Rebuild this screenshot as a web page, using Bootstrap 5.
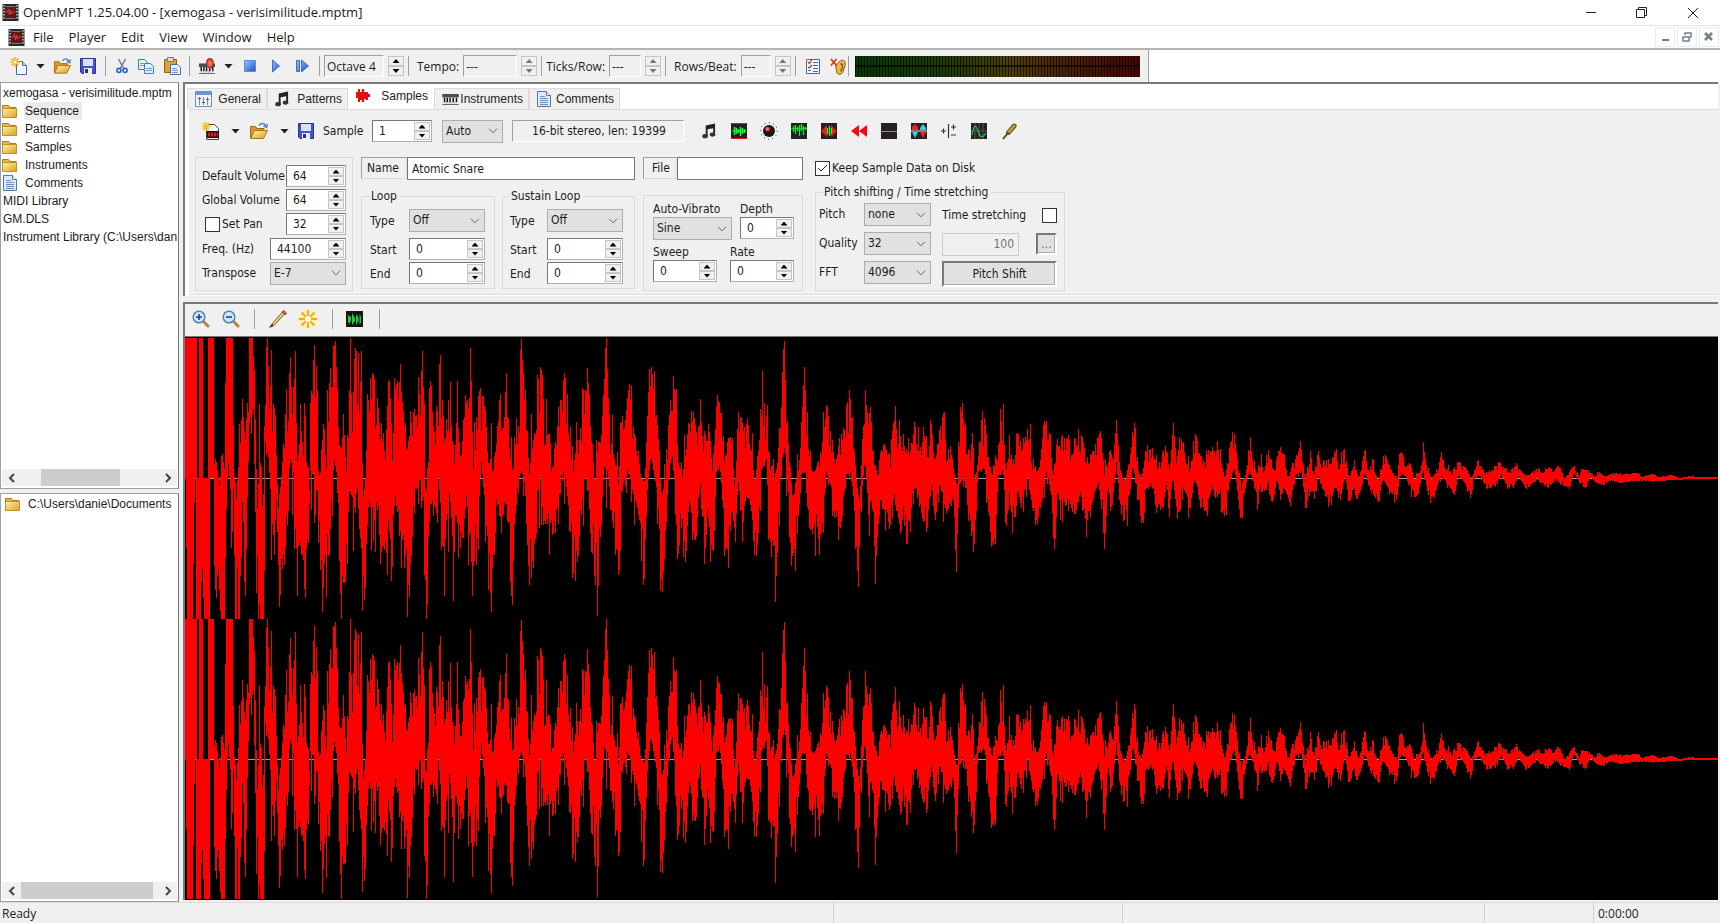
<!DOCTYPE html>
<html lang="en">
<head>
<meta charset="utf-8">
<meta name="viewport" content="width=device-width, initial-scale=1">
<title>OpenMPT 1.25.04.00 - [xemogasa - verisimilitude.mptm]</title>
<link href="https://cdn.jsdelivr.net/npm/bootstrap@5.3.0/dist/css/bootstrap.min.css" rel="stylesheet">
<style>
:root{--face:#f0f0f0;--edge:#a0a0a0;--dark:#787878;--soft:#dcdcdc}
body{font:12px/15px "DejaVu Sans Condensed","Liberation Sans",sans-serif;color:#1c1c1c;background:var(--face);height:100vh;overflow:hidden}
svg{display:block;flex:none}
button{border:0;background:none;padding:0;color:inherit;font:inherit}
.ui-font{font-family:"Open Sans","Noto Sans",sans-serif}
.gdi-font{font-family:"Liberation Sans",Arial,sans-serif}
.titlebar{height:26px;font-size:13px;background:#fff;padding-left:2px;border-bottom:1px solid #e4e4e4}
.titlebar button{width:51px;height:25px}
.menubar{height:24px;font-size:13px;background:#fff;padding-left:8px;border-bottom:2px solid #b4b4b4}
.menubar a{color:#1c1c1c;text-decoration:none;margin-right:15px}
.mdi button{width:20px;height:20px;border:1px solid #ececec;margin-left:2px}
.toolbar{height:32px;background:#fff;font-size:12px}
.toolbar-in{background:var(--face);border-right:1px solid var(--edge);width:1149px;padding-left:10px}
.vline{width:1px;height:20px;background:var(--edge);flex:none}
.tbtn{width:18px;height:22px;display:flex;align-items:center;justify-content:center;flex:none}
.drop{width:9px;height:5px;background:#222;clip-path:polygon(0 0,100% 0,50% 100%);flex:none}
.readout{height:22px;border:1px solid #fff;border-top-color:var(--edge);border-left-color:var(--edge);background:var(--face);border-radius:0;padding:0 2px;min-width:0;font:inherit;color:inherit}
.meter{width:285px;flex:none;height:21px;background:linear-gradient(#0000 9px,#0009 9px 11px,#0000 11px),repeating-linear-gradient(90deg,#000a 0 1px,#0000 1px 3px),linear-gradient(90deg,#033a06,#233d04 33%,#524004 55%,#4c2202 75%,#480404)}
.side{width:179px;flex:none;font-size:12px}
.pane{background:#fff;border:1px solid var(--edge);border-right-color:var(--dark)}
.tree{list-style:none;margin:0;padding:1px 0 0}
.tree li{height:18px;line-height:18px;white-space:nowrap;overflow:hidden;padding-left:2px;display:flex;align-items:center}
.tree li svg{margin-left:-1px;margin-right:7px}
.tree .sel{background:#ebebeb;padding:0 3px 0 1px;margin-left:-1px}
.hscroll{height:17px;background:var(--face);margin:0 1px 2px;display:flex}
.hscroll button{width:19px;flex:none;display:flex;align-items:center;justify-content:center}
.hscroll .thumb{background:#cdcdcd;height:17px}
.docs{min-width:0}
.upper{border-left:2px solid var(--dark);border-top:2px solid var(--dark);height:214px;background:#fff;margin-left:4px;margin-right:2px}
.tabstrip{height:25px;padding-left:2px;font-size:12px}
.tabstrip button{height:21px;border:1px solid var(--soft);border-bottom:0;background:var(--face);display:flex;align-items:center;justify-content:space-between;padding:0 5px 0 7px}
.tabstrip button.on{height:24px;background:#fff;border-color:#fff;padding-bottom:3px}
.props{background:var(--face);border-top:1px solid var(--soft);margin-left:4px;height:186px;padding:9px 0 0 6px;border-bottom:1px solid var(--soft)}
.cmd-row{height:24px}
fieldset{border:1px solid var(--soft);padding:6px 0 4px 8px;margin:0;min-width:0}
legend{float:none;width:auto;font-size:12px;line-height:14px;margin:0;padding:0 3px 0 1px}
.spin{display:flex;height:22px;border:1px solid var(--dark);border-right-color:#b0b0b0;border-bottom-color:#b0b0b0;background:#fff;padding:1px}
.spin input{flex:1 1 0;min-width:0;border:0;padding:0 0 0 5px;font:inherit;color:inherit;background:none}
.updown{width:16px;flex:none;display:flex;flex-direction:column}
.updown button{flex:1;background:var(--face);border:1px solid #c6c6c6;display:flex;align-items:center;justify-content:center}
.updown button::before{content:"";width:7px;height:4px;background:#000;clip-path:polygon(50% 0,100% 100%,0 100%)}
.updown button:last-child::before{clip-path:polygon(0 0,100% 0,50% 100%)}
.updown.off button::before{background:#777}
.combo{appearance:none;height:23px;border:1px solid #adadad;border-radius:0;background:#e1e1e1 url("data:image/svg+xml,%3Csvg xmlns='http://www.w3.org/2000/svg' width='10' height='6'%3E%3Cpath d='M1 .8l4 4 4-4' fill='none' stroke='%23666'/%3E%3C/svg%3E") no-repeat right 4px center;padding:0 3px;font:inherit;color:inherit;min-width:0}
.tick{appearance:none;width:15px;height:15px;border:1px solid #333;background:#fff;margin:0;flex:none}
.tick:checked{background:#fff url("data:image/svg+xml,%3Csvg xmlns='http://www.w3.org/2000/svg' width='13' height='13'%3E%3Cpath d='M2 6l3 3 6-6' fill='none' stroke='%23222'/%3E%3C/svg%3E") center}
.cap{border:1px solid var(--soft);border-top-color:var(--edge);border-left-color:var(--edge);height:22px;line-height:20px;padding-left:5px}
.field{border:1px solid var(--dark);background:#fff;height:23px;padding:0 4px;border-radius:0;min-width:0;font:inherit;color:inherit}
.basic{width:158px;height:134px;padding:7px 6px 0;display:flex;flex-direction:column;gap:2px}
.basic>div{display:flex;height:22px;align-items:center;justify-content:space-between;white-space:nowrap}
.basic>.lower-row{margin-bottom:-1px;padding-top:1px;height:23px}
.loop{display:grid;grid-template-columns:39px 76px;grid-template-rows:27px 22px 22px;row-gap:2px;align-items:start;width:124px}
.loop.sus{grid-template-columns:37px 76px}
.loop label{line-height:24px}
.vib label{display:block;line-height:16px}
.stretch{display:grid;grid-template-columns:45px 67px 115px;grid-template-rows:24px 24px 26px;row-gap:5px;padding:4px 0 3px 3px;width:248px}
.stretch>label{padding-top:4px}
.stretch .last{margin-left:11px;width:115px;display:flex;justify-content:space-between;align-items:center}
.push{background:#e1e1e1;border:2px solid #fff;border-top-color:var(--dark);border-left-color:var(--dark);box-shadow:inset -1px -1px #aaa}
.lower{border-left:2px solid var(--dark);border-top:2px solid var(--dark);margin:6px 2px 2px 4px;min-height:0}
.viewbar{height:32px;padding:0 0 2px 7px}
.wave{background:#000;min-height:0;border-top:1px solid var(--dark)}
.status{height:21px;border-top:1px solid var(--soft);padding-left:2px;line-height:22px}
.status div{border-left:1px solid #cfcfcf;padding-left:4px}
</style>
</head>
<body class="d-flex flex-column">

<svg width="0" height="0" class="position-absolute" aria-hidden="true">
 <defs>
  <linearGradient id="gFold" x2="1" y2="1"><stop stop-color="#fff3b0"/><stop offset="1" stop-color="#dd9f1f"/></linearGradient>
  <linearGradient id="gBlue" x2="1" y2="1"><stop stop-color="#9cc4ff"/><stop offset="1" stop-color="#1c50c8"/></linearGradient>
  <radialGradient id="gRed"><stop stop-color="#ff9a80"/><stop offset="1" stop-color="#c81808"/></radialGradient>
 </defs>
 <symbol id="app" viewBox="0 0 16 17"><path fill="#2a2a2a" d="M0 0h16v17H0z"/><path fill="#5c1a1a" d="M3 2h10v13H3z"/><path stroke="#ccc" stroke-width="1.500" stroke-dasharray="1.500 1.500" d="M1.500 1v15M14.500 1v15"/><path stroke="#f33" fill="none" d="M3 8h2l1-3 1 6 1-5 1 4 1-2h3"/><path stroke="#777" d="M3 2.500h10M3 14.500h10"/></symbol>
 <symbol id="new" viewBox="0 0 18 18"><path fill="#f2f7ff" stroke="#4a6a94" d="M6.500 4.500h6l4 4v9h-10z"/><path fill="#b7cfee" stroke="#4a6a94" d="M12.500 4.500v4h4"/><path stroke="#f5b21a" stroke-width="1.600" d="M5 0v10M0 5h10M1.500 1.500l7 7M8.500 1.500l-7 7"/><circle cx="5" cy="5" r="1.600" fill="#fffbd0"/></symbol>
 <symbol id="open" viewBox="0 0 20 18"><path fill="#d79a29" stroke="#9a6a12" d="M1.500 16.500v-12h5l1.500 2h7v3"/><path fill="url(#gFold)" stroke="#a8751a" d="M1.500 16.500l4-8h13l-4 8z"/><path fill="none" stroke="#5b84b8" stroke-width="1.500" d="M10 3.500c2-3 6-2.500 7 1M14.500 4l3 1.500 1-3.500"/></symbol>
 <symbol id="save" viewBox="0 0 16 16"><path fill="#4454c8" stroke="#26348e" d="M.5.5h15v15H2l-1.500-1.500z"/><path fill="#d9e2fb" d="M3 1h10v7H3z"/><path fill="#eee" d="M4 10h8v6H4z"/><path fill="#26348e" d="M5 11h3v4H5z"/></symbol>
 <symbol id="cut" viewBox="0 0 16 18"><path stroke="#7b8ba5" stroke-width="1.800" d="M4 1l6 11M12 1L6 12"/><g fill="none" stroke="#2860bd" stroke-width="1.800"><circle cx="4.500" cy="14" r="2.300"/><circle cx="11.500" cy="14" r="2.300"/></g></symbol>
 <symbol id="copy" viewBox="0 0 18 16"><g fill="#e4efff" stroke="#4a78b8"><path d="M1.500 1.500h6l3 3v7h-9z"/><path d="M7.500 5.500h6l3 3v7h-9z"/></g><path stroke="#6c9ad8" d="M3 5.500h4M3 7.500h4M9 10.500h6M9 12.500h6"/></symbol>
 <symbol id="paste" viewBox="0 0 18 18"><path fill="#d9a33a" stroke="#8f6412" d="M1.500 2.500h12v13h-12z"/><path fill="#ddd" stroke="#777" d="M4.500.5h6v4h-6z"/><path fill="#eaf2ff" stroke="#4a6fa5" d="M7.500 7.500h7l3 3v7h-10z"/><path stroke="#6c9ad8" d="M9 11.500h5M9 13.500h6M9 15.500h6"/></symbol>
 <symbol id="keys" viewBox="0 0 18 12"><path fill="#4a4a4a" d="M0 0h18v4H0z"/><path fill="#eee" d="M0 4h18v7H0z"/><path stroke="#555" d="M0 11.500h18"/><path stroke="#999" stroke-width=".6" d="M4.500 8v3M7.500 8v3M10.500 8v3M13.500 8v3"/><path stroke="#111" stroke-width="1.600" d="M2.500 4v5M5.500 4v5M8.500 4v5M12 4v5M15.500 4v5"/></symbol>
 <symbol id="rec" viewBox="0 0 18 18"><use href="#keys" y="6" width="18" height="12"/><path fill="url(#gRed)" d="M12 0a4.500 4.500 0 014.500 5c0 3-1.500 4-2.500 7h-3c-1-3-3-4-3-7a4.500 4.500 0 014-5z"/></symbol>
 <symbol id="stop" viewBox="0 0 12 12"><path fill="url(#gBlue)" stroke="#5b8ae0" d="M.5.5h11v11H.5z"/></symbol>
 <symbol id="play" viewBox="0 0 8 14"><path fill="url(#gBlue)" stroke="#3b6cd0" d="M.5 1l7 6-7 6z"/></symbol>
 <symbol id="pplay" viewBox="0 0 13 14"><path fill="url(#gBlue)" stroke="#3b6cd0" d="M.5 1.500h3v11h-3zM5.500 1l7 6-7 6z"/></symbol>
 <symbol id="list" viewBox="0 0 16 16"><path fill="#f4f8ff" stroke="#4668a8" d="M1.500 1.500h13v14h-13z"/><path stroke="#3c66c8" d="M8 4.500h5M8 7.500h5M8 10.500h5M8 13.500h5"/><path fill="none" stroke="#d03030" stroke-width="1.300" d="M3 4l1.500 1.500L7 1M3 9l1.500 1L7 7"/><path stroke="#3c66c8" d="M3 12.500h3"/></symbol>
 <symbol id="tune" viewBox="0 0 18 18"><path fill="#e6b94a" stroke="#7d5a10" d="M6 8l5-5c3-2 6 0 5 5l-2 6c-1 4-6 4-7 1z"/><path fill="none" stroke="#7d5a10" stroke-width="1.500" d="M11 6c3 0 3 6 0 8"/><path stroke="#e02818" stroke-width="1.600" d="M1 1l6 7M7 1L1 8"/></symbol>
 <symbol id="folder" viewBox="0 0 16 14"><path fill="#e9b93c" stroke="#b07c14" d="M.5 13.500v-12h6l1.500 2h6v2"/><path fill="url(#gFold)" stroke="#c3901f" d="M.5 4.500h14v9H.5z"/></symbol>
 <symbol id="page" viewBox="0 0 14 16"><path fill="#dce9fa" stroke="#55779f" d="M.5.5h9l4 4v11H.5z"/><path fill="#fff" stroke="#55779f" d="M9.500.5v4h4"/><path stroke="#6e93bf" d="M3 5.500h5M3 7.500h8M3 9.500h8M3 11.500h8M3 13.500h8"/></symbol>
 <symbol id="sliders" viewBox="0 0 17 16"><path fill="#eef4fa" stroke="#6f8fb5" d="M.5.5h16v15H.5z"/><path fill="#6a96d4" d="M1 1h15v3H1z"/><path stroke="#888" d="M4.500 6v8M8.500 6v8M12.500 6v8"/><path stroke="#555" d="M3 7.500h3M7 11.500h3M11 8.500h3"/></symbol>
 <symbol id="note" viewBox="0 0 15 16"><path fill="#222" d="M4 2l10-2v12h-2V5L6 6v8H4z"/><ellipse cx="3.300" cy="13.500" rx="3" ry="2.300" fill="#333"/><ellipse cx="11.300" cy="11.800" rx="3" ry="2.300" fill="#333"/></symbol>
 <symbol id="redwave" viewBox="0 0 14 16"><path stroke="#e01010" stroke-width="2.200" d="M1 4v6M3 1v13M5 4v8M7 1v13M9 4v7M11 4v8M13 6v3"/></symbol>
 <symbol id="newsmp" viewBox="0 0 18 18"><path fill="#f7f7ff" stroke="#444" d="M4.500 2.500h8l4 4v11h-12z"/><path fill="#111" d="M5 9h12v7H5z"/><path stroke="#f11" stroke-width="4" stroke-dasharray="2 1" d="M6 12.500h10"/><path stroke="#f5c21a" stroke-width="1.300" d="M4 0v9M0 4.500h9M1 1l6 7M7 1L1 8"/></symbol>
 <symbol id="norm" viewBox="0 0 16 16"><path fill="#222" d="M0 0h16v16H0z"/><path stroke="#e11" d="M0 .5h16M0 15.500h16"/><path stroke="#1f3" d="M1 8h14"/><path stroke="#1f3" stroke-width="1.500" d="M3.500 4v8M5.500 5v6M7.500 6v4M9.500 4v9M11.500 5v6M13.500 6v4"/></symbol>
 <symbol id="knob" viewBox="0 0 18 18"><circle cx="9" cy="9" r="8.300" fill="none" stroke="#222" stroke-width="1" stroke-dasharray="1 3.300"/><circle cx="9" cy="9" r="6" fill="#181818"/><circle cx="7.500" cy="7" r="2.500" fill="url(#gRed)"/></symbol>
 <symbol id="dc" viewBox="0 0 16 16"><path fill="#222" d="M0 0h16v16H0z"/><path stroke="#2a7" d="M0 5.500h16"/><path stroke="#1e2" stroke-width="1.300" d="M2.500 3v6M4.500 2v9M6.500 4v4M8.500 2v11M10.500 1v7M12.500 3v9M14.500 4v3"/></symbol>
 <symbol id="grow" viewBox="0 0 16 16"><path fill="#222" d="M0 0h16v16H0z"/><path fill="#f11" d="M0 8l6-6v12zM16 8l-6-6v12z"/><path stroke="#1f3" stroke-width="1.300" d="M6.500 5v6M8.500 3v10M10.500 5v6"/></symbol>
 <symbol id="rev" viewBox="0 0 16 14"><path fill="#f00a14" d="M8 1v12L0 7zM16 1v12L8 7z"/></symbol>
 <symbol id="silence" viewBox="0 0 16 16"><path fill="#222" d="M0 0h16v16H0z"/><path stroke="#1d3" d="M0 8.500h16"/></symbol>
 <symbol id="invert" viewBox="0 0 16 16"><path fill="#222" d="M0 0h16v16H0z"/><path fill="#f12020" d="M1 7V4l3-3 3 3v3zM9 9h6l-3 6z"/><path fill="#40c8e8" d="M1 9h6l-3 6zM9 7V5l3-4 3 4v2z"/><path stroke="#ddd" d="M0 8h16"/></symbol>
 <symbol id="sign" viewBox="0 0 16 16"><path stroke="#333" stroke-width="1.200" d="M0 8h5M2.500 5.500v5M7.500 1v14M10 4h5M12.500 1.500v5M10 12h5"/></symbol>
 <symbol id="auto" viewBox="0 0 16 16"><path fill="#222" d="M0 0h16v16H0z"/><path stroke="#555" d="M0 8h16M4 0v16M8 0v16M12 0v16"/><path fill="none" stroke="#2c4" stroke-width="1.200" d="M1 12c2-12 4-10 6-4s4 8 8 2"/></symbol>
 <symbol id="fork" viewBox="0 0 16 18"><path fill="none" stroke="#5a4a10" stroke-width="5" stroke-linecap="round" d="M13 3L7 10"/><path fill="none" stroke="#b8a23c" stroke-width="3" stroke-linecap="round" d="M13 3L7 10"/><path stroke="#5a4a10" stroke-width="2" d="M7 10l-6 7"/></symbol>
 <symbol id="zin" viewBox="0 0 18 18"><path stroke="#b98630" stroke-width="3" stroke-linecap="round" d="M12 12l4 4"/><circle cx="7" cy="7" r="5.800" fill="#d4e8fb" stroke="#5582b4" stroke-width="1.500"/><path stroke="#1c3f90" stroke-width="1.600" d="M4 7h6M7 4v6"/></symbol>
 <symbol id="zout" viewBox="0 0 18 18"><path stroke="#b98630" stroke-width="3" stroke-linecap="round" d="M12 12l4 4"/><circle cx="7" cy="7" r="5.800" fill="#d4e8fb" stroke="#5582b4" stroke-width="1.500"/><path stroke="#1c3f90" stroke-width="1.600" d="M4 7h6"/></symbol>
 <symbol id="pencil" viewBox="0 0 18 18"><path fill="#f0cf7c" stroke="#7a5a20" d="M3 14L13.500 2l2 2L5 15.500z"/><path fill="#d8685c" stroke="#8a3a30" d="M13 2l1.500-1.500L17.500 3 16 5z"/><path fill="#333" d="M2.500 14l2.500 2-5 2z"/></symbol>
 <symbol id="sun" viewBox="0 0 20 20"><circle cx="10" cy="10" r="10" fill="#fff0b0"/><path stroke="#f0ab1c" stroke-width="1.800" d="M10 1v18M1 10h18M3.500 3.500l13 13M16.500 3.500l-13 13"/><circle cx="10" cy="10" r="3" fill="#fffbe0"/></symbol>
 <symbol id="grid" viewBox="0 0 17 16"><path fill="#161616" d="M0 0h17v16H0z"/><path fill="#28c838" d="M2 4l3 2V3l1-1 3 5V2l4 5V3l2 2v7l-2 1-2-3v4l-3-4-1 4-3-4v3l-2-2z"/><path stroke="#111" d="M5.500 0v16M9.500 0v16M13 0v16"/></symbol>
 <symbol id="lt" viewBox="0 0 8 10"><path fill="none" stroke="#444" stroke-width="2" d="M6 1L2 5l4 4"/></symbol>
 <symbol id="gt" viewBox="0 0 8 10"><path fill="none" stroke="#444" stroke-width="2" d="M2 1l4 4-4 4"/></symbol>
</svg>

<header class="titlebar ui-font d-flex align-items-center">
 <svg width="17" height="17"><use href="#app"/></svg><span class="ms-1">OpenMPT 1.25.04.00 - [xemogasa - verisimilitude.mptm]</span>
 <div class="ms-auto d-flex" style="padding-right:2px">
  <button aria-label="Minimize"><svg class="m-auto" width="12" height="12"><path stroke="#222" d="M1 5.500h10"/></svg></button>
  <button aria-label="Restore"><svg class="m-auto" width="12" height="12"><path fill="none" stroke="#222" d="M.5 2.500h8v8h-8zM2.500 2.500v-2h8v8h-2"/></svg></button>
  <button aria-label="Close"><svg class="m-auto" width="12" height="12"><path stroke="#222" d="M1 1l10 10M11 1L1 11"/></svg></button>
 </div>
</header>

<nav class="menubar ui-font d-flex align-items-center">
 <svg class="me-2" width="17" height="17"><use href="#app"/></svg>
 <a href="#">File</a><a href="#">Player</a><a href="#">Edit</a><a href="#">View</a><a href="#">Window</a><a href="#">Help</a>
 <div class="mdi ms-auto d-flex" style="padding-right:1px">
  <button aria-label="Minimize document"><svg class="m-auto" width="9" height="10"><path stroke="#70808f" stroke-width="2" d="M1 8h7"/></svg></button>
  <button aria-label="Restore document"><svg class="m-auto" width="10" height="10"><path fill="none" stroke="#70808f" stroke-width="1.500" d="M1 5h6v4H1zM3 3V1h6v4H7"/></svg></button>
  <button aria-label="Close document"><svg class="m-auto" width="10" height="10"><path stroke="#70808f" stroke-width="2.500" d="M1 1l7 7M8 1L1 8"/></svg></button>
 </div>
</nav>

<div class="toolbar ui-font">
 <div class="toolbar-in d-flex align-items-center h-100">
  <button class="tbtn" aria-label="New"><svg width="18" height="18"><use href="#new"/></svg></button>
  <span class="drop ms-2"></span>
  <button class="tbtn ms-2" aria-label="Open"><svg width="19" height="18"><use href="#open"/></svg></button>
  <button class="tbtn ms-2" aria-label="Save"><svg width="16" height="16"><use href="#save"/></svg></button>
  <span class="vline ms-2 me-1"></span>
  <button class="tbtn ms-1" aria-label="Cut" style="width:15px"><svg width="14" height="16"><use href="#cut"/></svg></button>
  <button class="tbtn ms-2" aria-label="Copy"><svg width="18" height="16"><use href="#copy"/></svg></button>
  <button class="tbtn ms-2" aria-label="Paste"><svg width="18" height="18"><use href="#paste"/></svg></button>
  <span class="vline mx-2"></span>
  <button class="tbtn" aria-label="Record"><svg width="18" height="16"><use href="#rec"/></svg></button>
  <span class="drop ms-2"></span>
  <button class="tbtn ms-2" aria-label="Stop"><svg width="12" height="12"><use href="#stop"/></svg></button>
  <button class="tbtn ms-2" aria-label="Play pattern"><svg width="8" height="14"><use href="#play"/></svg></button>
  <button class="tbtn ms-2" aria-label="Play"><svg width="13" height="14"><use href="#pplay"/></svg></button>
  <span class="vline ms-2 me-1"></span>
  <input class="readout" style="width:60px" value="Octave 4" aria-label="Octave" readonly>
  <span class="updown ms-1" style="height:20px"><button aria-label="Octave up"></button><button aria-label="Octave down"></button></span>
  <span class="vline ms-1"></span>
  <label class="ms-2 me-1" for="tempo">Tempo:</label><input id="tempo" class="readout" style="width:54px" value="---" readonly>
  <span class="updown off ms-1" style="height:20px"><button aria-label="Tempo up"></button><button aria-label="Tempo down"></button></span>
  <span class="vline ms-1"></span>
  <label class="mx-1" for="ticks">Ticks/Row:</label><input id="ticks" class="readout" style="width:32px" value="---" readonly>
  <span class="updown off ms-1" style="height:20px"><button aria-label="Ticks up"></button><button aria-label="Ticks down"></button></span>
  <span class="vline ms-1"></span>
  <label class="ms-2 me-1" for="rows">Rows/Beat:</label><input id="rows" class="readout" style="width:30px" value="---" readonly>
  <span class="updown off ms-1" style="height:20px"><button aria-label="Rows up"></button><button aria-label="Rows down"></button></span>
  <span class="vline ms-1"></span>
  <button class="tbtn ms-2" aria-label="Options"><svg width="16" height="16"><use href="#list"/></svg></button>
  <button class="tbtn ms-2" aria-label="Panic"><svg width="17" height="17"><use href="#tune"/></svg></button>
  <span class="vline ms-auto"></span><span class="meter me-2" style="margin-left:6px"></span>
 </div>
</div>

<div class="d-flex flex-grow-1" style="min-height:0">
 <aside class="side gdi-font d-flex flex-column">
  <div class="pane d-flex flex-column" style="flex:407 1 0">
   <ul class="tree flex-grow-1">
    <li>xemogasa - verisimilitude.mptm</li>
    <li><svg width="16" height="14"><use href="#folder"/></svg><span class="sel">Sequence</span></li>
    <li><svg width="16" height="14"><use href="#folder"/></svg>Patterns</li>
    <li><svg width="16" height="14"><use href="#folder"/></svg>Samples</li>
    <li><svg width="16" height="14"><use href="#folder"/></svg>Instruments</li>
    <li><svg width="16" height="16"><use href="#page"/></svg>Comments</li>
    <li>MIDI Library</li><li>GM.DLS</li><li>Instrument Library (C:\Users\dan</li>
   </ul>
   <div class="hscroll"><button aria-label="Scroll left"><svg width="8" height="10"><use href="#lt"/></svg></button><div style="flex:20"></div><div class="thumb" style="flex:78"></div><div style="flex:38"></div><button aria-label="Scroll right"><svg width="8" height="10"><use href="#gt"/></svg></button></div>
  </div>
  <div class="pane d-flex flex-column mt-1" style="flex:409 1 0">
   <ul class="tree flex-grow-1"><li class="ps-1"><svg class="ms-0" width="16" height="14"><use href="#folder"/></svg>C:\Users\danie\Documents</li></ul>
   <div class="hscroll"><button aria-label="Scroll left"><svg width="8" height="10"><use href="#lt"/></svg></button><div class="thumb" style="flex:131"></div><div style="flex:5"></div><button aria-label="Scroll right"><svg width="8" height="10"><use href="#gt"/></svg></button></div>
  </div>
 </aside>

 <main class="docs flex-grow-1 d-flex flex-column">
  <section class="upper">
   <div class="tabstrip gdi-font d-flex align-items-end" role="tablist">
    <button role="tab" style="width:80px"><svg width="17" height="16"><use href="#sliders"/></svg>General</button>
    <button role="tab" style="width:81px"><svg width="14" height="16"><use href="#note"/></svg>Patterns</button>
    <button role="tab" class="on" style="width:86px"><svg width="14" height="16"><use href="#redwave"/></svg>Samples</button>
    <button role="tab" style="width:95px"><svg width="17" height="11"><use href="#keys"/></svg>Instruments</button>
    <button role="tab" style="width:91px"><svg width="14" height="16"><use href="#page"/></svg>Comments</button>
   </div>
   <div class="props">
    <div class="cmd-row d-flex align-items-center">
     <button class="tbtn" style="margin-left:7px" aria-label="New sample"><svg width="18" height="18"><use href="#newsmp"/></svg></button>
     <span class="drop" style="margin-left:11px"></span>
     <button class="tbtn me-1" style="margin-left:10px" aria-label="Open sample"><svg width="20" height="18"><use href="#open"/></svg></button>
     <span class="drop ms-2"></span>
     <button class="tbtn ms-2" aria-label="Save sample"><svg width="16" height="16"><use href="#save"/></svg></button>
     <label class="ms-2" for="smp" style="width:49px">Sample</label>
     <span class="spin" style="width:60px"><input id="smp" value="1"><span class="updown"><button aria-label="Next sample"></button><button aria-label="Previous sample"></button></span></span>
     <select class="combo" style="width:61px;margin-left:10px" aria-label="Zoom"><option>Auto</option></select>
     <output class="readout text-center ps-1" style="width:172px;margin-left:9px;line-height:20px">16-bit stereo, len: 19399</output>
     <div class="d-flex ms-3" style="gap:12px">
      <button class="tbtn" aria-label="Play sample"><svg width="14" height="16"><use href="#note"/></svg></button>
      <button class="tbtn" aria-label="Normalize"><svg width="16" height="16"><use href="#norm"/></svg></button>
      <button class="tbtn" aria-label="Amplify"><svg width="18" height="18"><use href="#knob"/></svg></button>
      <button class="tbtn" aria-label="Remove DC offset"><svg width="16" height="16"><use href="#dc"/></svg></button>
      <button class="tbtn" aria-label="Resample"><svg width="16" height="16"><use href="#grow"/></svg></button>
      <button class="tbtn" aria-label="Reverse"><svg width="16" height="14"><use href="#rev"/></svg></button>
      <button class="tbtn" aria-label="Silence"><svg width="16" height="16"><use href="#silence"/></svg></button>
      <button class="tbtn" aria-label="Invert"><svg width="16" height="16"><use href="#invert"/></svg></button>
      <button class="tbtn" aria-label="Signed/unsigned"><svg width="16" height="16"><use href="#sign"/></svg></button>
      <button class="tbtn" aria-label="Autotune"><svg width="16" height="16"><use href="#auto"/></svg></button>
      <button class="tbtn" aria-label="Tune"><svg width="15" height="17"><use href="#fork"/></svg></button>
     </div>
    </div>

    <div class="d-flex align-items-start" style="margin-top:14px">
     <fieldset class="basic">
      <div><label for="dv">Default Volume</label><span class="spin" style="width:60px"><input id="dv" value="64"><span class="updown"><button aria-label="Up"></button><button aria-label="Down"></button></span></span></div>
      <div><label for="gv">Global Volume</label><span class="spin" style="width:60px"><input id="gv" value="64"><span class="updown"><button aria-label="Up"></button><button aria-label="Down"></button></span></span></div>
      <div><span class="d-flex" style="padding-left:3px"><input class="tick" type="checkbox" id="sp"><label for="sp" style="padding-left:2px">Set Pan</label></span><span class="spin" style="width:60px"><input aria-label="Pan" value="32"><span class="updown"><button aria-label="Up"></button><button aria-label="Down"></button></span></span></div>
      <div class="lower-row"><label for="fr">Freq. (Hz)</label><span class="spin" style="width:76px"><input id="fr" value="44100"><span class="updown"><button aria-label="Up"></button><button aria-label="Down"></button></span></span></div>
      <div class="lower-row"><label for="tr">Transpose</label><select class="combo" id="tr" style="width:76px"><option>E-7</option></select></div>
     </fieldset>

     <div class="ms-2">
      <div class="d-flex" style="width:274px"><label class="cap" for="nm" style="width:46px">Name</label><input class="field flex-grow-1" id="nm" value="Atomic Snare"></div>
      <div class="d-flex" style="gap:7px;margin-top:9px">
       <fieldset><legend>Loop</legend><div class="loop">
        <label for="lt1">Type</label><select class="combo" id="lt1"><option>Off</option></select>
        <label for="ls1">Start</label><span class="spin"><input id="ls1" value="0"><span class="updown"><button aria-label="Up"></button><button aria-label="Down"></button></span></span>
        <label for="le1">End</label><span class="spin"><input id="le1" value="0"><span class="updown"><button aria-label="Up"></button><button aria-label="Down"></button></span></span></div></fieldset>
       <fieldset style="padding-left:7px"><legend>Sustain Loop</legend><div class="loop sus">
        <label for="lt2">Type</label><select class="combo" id="lt2"><option>Off</option></select>
        <label for="ls2">Start</label><span class="spin"><input id="ls2" value="0"><span class="updown"><button aria-label="Up"></button><button aria-label="Down"></button></span></span>
        <label for="le2">End</label><span class="spin"><input id="le2" value="0"><span class="updown"><button aria-label="Up"></button><button aria-label="Down"></button></span></span></div></fieldset>
      </div>
     </div>

     <div class="vib ms-2" style="width:160px">
      <div class="d-flex"><label class="cap" for="fl" style="width:38px;padding-left:8px;line-height:20px">File</label><input class="field flex-grow-1" id="fl"></div>
      <fieldset style="margin-top:15px;height:96px;padding:5px 0 0 9px">
       <div class="d-flex" style="gap:8px">
        <div style="width:79px"><label for="av">Auto-Vibrato</label><select class="combo w-100 d-block" id="av"><option>Sine</option></select></div>
        <div style="width:54px"><label for="dp">Depth</label><span class="spin"><input id="dp" value="0"><span class="updown"><button aria-label="Up"></button><button aria-label="Down"></button></span></span></div></div>
       <div class="d-flex mt-1" style="gap:13px">
        <div style="width:64px"><label for="sw">Sweep</label><span class="spin"><input id="sw" value="0"><span class="updown"><button aria-label="Up"></button><button aria-label="Down"></button></span></span></div>
        <div style="width:64px"><label for="rt">Rate</label><span class="spin"><input id="rt" value="0"><span class="updown"><button aria-label="Up"></button><button aria-label="Down"></button></span></span></div></div>
      </fieldset>
     </div>

     <div class="ms-2 ps-1">
      <div class="d-flex align-items-center" style="height:22px"><input class="tick" type="checkbox" id="kd" checked><label for="kd" style="padding-left:2px">Keep Sample Data on Disk</label></div>
      <fieldset style="margin-top:6px;padding:0;height:106px"><legend style="margin-left:7px">Pitch shifting / Time stretching</legend>
      <div class="stretch">
       <label for="pt">Pitch</label><select class="combo" id="pt"><option>none</option></select><span class="last"><label for="ts">Time stretching</label><input class="tick" type="checkbox" id="ts"></span>
       <label for="ql">Quality</label><select class="combo" id="ql"><option>32</option></select><span class="last"><input class="field text-end text-secondary" style="width:77px;background:#f0f0f0;border-color:#ccc" value="100" aria-label="Stretch percent" disabled><button class="push text-secondary" style="width:21px;height:22px" aria-label="Stretch settings">...</button></span>
       <label for="ff">FFT</label><select class="combo" id="ff"><option>4096</option></select><button class="last push justify-content-center">Pitch Shift</button>
      </div></fieldset>
     </div>
    </div>
   </div>
  </section>

  <section class="lower flex-grow-1 d-flex flex-column">
   <div class="viewbar d-flex align-items-center">
    <button class="tbtn" aria-label="Zoom in"><svg width="18" height="18"><use href="#zin"/></svg></button>
    <button class="tbtn me-1" style="width:20px;margin-left:11px" aria-label="Zoom out"><svg width="18" height="18"><use href="#zout"/></svg></button>
    <span class="vline" style="margin:0 9px"></span>
    <button class="tbtn ms-1" style="width:20px" aria-label="Draw"><svg width="18" height="18"><use href="#pencil"/></svg></button>
    <button class="tbtn" style="width:20px;margin-left:10px" aria-label="Add silence"><svg width="20" height="20"><use href="#sun"/></svg></button>
    <span class="vline" style="margin:0 12px 0 14px"></span>
    <button class="tbtn" aria-label="Grid"><svg width="17" height="16"><use href="#grid"/></svg></button>
    <span class="vline ms-3"></span>
   </div>
   <div class="wave flex-grow-1">
    <svg class="w-100 h-100" viewBox="0 0 1533 562" preserveAspectRatio="none" shape-rendering="crispEdges" role="img" aria-label="Stereo waveform">
     <path stroke="#9a9a9a" d="M0 141.500h1533M0 421.500h1533"/>
     <path id="chL" stroke="#f00" fill="none"/>
     <path id="chR" stroke="#f00" fill="none"/>
    </svg>
   </div>
  </section>
 </main>
</div>

<footer class="status ui-font d-flex">
 <span class="flex-grow-1">Ready</span>
 <div style="width:289px"></div><div style="width:362px"></div><div style="width:109px"></div><div style="width:127px">0:00:00</div>
</footer>

<script>
// Peak envelopes. Each block holds "x y" knots at three units per pixel:
// [x offset in pixels, y of the zero line, upper knots, lower knots].
const blocks = [
 [-4, 448,
 "12 28 46 28 47 448 52 448 53 28 65 28 66 448 80 448 81 28 98 28 99 410 103 385 115 480 121 362 130 430 133 28 155 28 158 430 165 510 172 400 183 230 192 350 200 180 203 28 217 28 222 270 228 560 235 360 245 600 250 190 256 28 262 130 270 200 275 300 281 220 290 560 303 405 312 225 320 230 325 45 333 270 341 125 348 400 357 290 365 375 375 400 385 540 387 230 399 50 408 200 412 500 427 270 435 400 445 125 452 210 457 30 463 40 468 230 476 400 486 295 495 430 505 125 513 240 524 55 532 80 540 225 545 520 553 440 560 145 570 165 577 105 583 240 600 250 612 380 621 160 627 200 632 440 640 180 651 150 660 190 668 280 678 390 685 310 692 370 697 230 712 230 722 30 728 250 733 540 740 440 747 165 758 320 775 130 785 235 790 380 798 210 812 255 820 385 829 230 840 380 853 200 860 220 869 190 875 440 885 300 893 190",
 "12 450 18 868 33 868 38 600 40 448 44 448 45 868 57 868 62 690 68 868 85 868 86 448 97 448 98 690 104 830 110 700 118 868 130 868 133 600 140 390 147 480 157 480 160 780 165 868 178 868 182 500 186 660 192 815 200 400 205 250 217 240 222 550 226 868 248 868 250 600 252 340 262 390 268 490 275 625 285 550 295 865 300 700 308 755 315 560 320 590 325 370 335 400 342 600 349 735 357 650 372 790 380 600 388 400 395 440 405 400 413 600 421 850 430 680 441 765 450 520 458 390 465 430 472 600 479 865 487 710 494 775 503 480 515 515 528 500 538 640 545 865 555 740 562 500 578 640 590 520 597 640 612 670 622 560 631 778 640 490 655 605 668 620 680 778 692 660 700 500 712 460 722 440 728 600 735 865 742 600 748 540 762 580 772 430 786 770 795 560 806 500 817 690 827 570 842 675 855 500 865 620 873 750 880 600 889 745 893 580"],
 [-4, 538,
 "893 278 910 300 920 470 935 520 945 440 952 305 965 310 976 215 985 480 995 520 1005 360 1012 390 1020 168 1028 240 1035 400 1045 540 1054 430 1065 400 1074 192 1083 230 1090 420 1100 395 1112 530 1125 440 1134 270 1143 370 1150 278 1158 278 1165 400 1175 520 1189 405 1198 440 1207 193 1213 200 1221 213 1230 400 1240 560 1253 430 1262 440 1271 138 1278 220 1286 430 1300 480 1310 590 1320 370 1330 390 1343 255 1349 258 1355 380 1365 430 1375 530 1390 560 1402 255 1408 262 1417 270 1430 400 1440 600 1453 540 1462 360 1472 248 1482 280 1490 490 1505 540 1518 430 1527 360 1534 325 1545 400 1558 370",
 "893 600 900 490 910 600 920 740 927 890 938 740 945 600 961 710 970 590 980 640 985 800 992 955 1000 660 1010 550 1020 500 1030 560 1036 700 1045 880 1052 740 1061 850 1068 600 1078 530 1090 755 1097 620 1110 690 1122 735 1135 560 1145 500 1155 560 1165 660 1172 790 1182 848 1190 700 1198 650 1210 530 1222 560 1233 820 1240 740 1249 890 1260 690 1268 500 1280 520 1295 690 1305 740 1313 855 1320 590 1340 500 1352 570 1365 620 1378 680 1389 840 1398 560 1410 460 1420 530 1430 640 1436 810 1443 860 1452 740 1460 540 1472 460 1485 620 1491 765 1503 660 1512 755 1525 590 1540 750 1550 600 1558 560"],
 [516, 448,
 "0 285 8 385 25 305 33 440 45 235 54 208 65 310 70 420 75 340 92 320 100 500 110 250 122 285 130 330 139 250 150 360 160 470 170 370 177 240 186 202 198 290 207 420 220 450 232 350 240 145 249 98 256 240 265 420 275 520 285 450 295 390 305 165 313 200 322 380 335 430 352 395 365 330 378 240 390 330 403 420 415 320 425 345 437 235 446 200 455 310 465 450 475 540 483 330 494 213 502 340 508 305 520 400 530 450 535 380 545 350 560 345 568 400 579 238 590 355 599 322 610 430 622 320 632 350 637 340 639 175 642 340 655 370 670 320 680 400 690 287 700 400 715 300 728 245 735 400 748 345 760 450 768 470 777 235 790 285 800 380 815 370 820 480 828 400 837 305 851 282 860 380 872 440 885 390 895 320 905 235 912 440 925 370 940 390 949 305 960 370 970 340 982 248 990 400 1005 430 1015 420 1030 255 1045 318 1055 450 1065 345 1085 370 1100 312 1110 380 1125 370 1142 312 1155 400 1170 380 1197 308 1210 450 1225 355 1235 400 1245 275 1255 420 1270 460 1285 390 1300 283 1308 420 1320 450 1335 370 1352 360 1370 420 1390 350 1405 430 1416 282 1425 400 1436 335 1450 390 1465 420 1483 312 1495 380 1510 400 1530 370 1559 360",
 "0 500 9 688 20 560 35 693 45 420 55 400 65 520 70 660 81 650 90 560 100 688 110 450 125 590 135 500 150 520 161 713 170 625 180 420 195 390 207 700 215 610 224 805 232 540 240 380 250 350 262 500 270 708 279 685 290 600 300 430 312 430 320 590 330 600 341 655 355 620 368 560 375 430 390 480 400 590 411 632 425 550 433 430 450 430 462 600 470 745 478 560 490 380 503 575 515 540 522 735 530 590 540 540 555 545 570 590 580 500 597 605 605 530 613 645 625 570 640 470 655 540 675 590 690 470 702 575 715 460 728 530 740 545 755 500 764 710 773 480 785 430 803 555 820 640 830 430 850 410 865 600 873 640 881 660 890 440 905 420 915 580 925 500 938 605 950 480 962 550 980 440 995 580 1010 570 1020 520 1035 420 1050 500 1060 678 1068 490 1085 555 1100 500 1120 575 1135 480 1155 585 1170 530 1190 460 1211 628 1220 480 1232 540 1245 400 1260 590 1280 550 1295 400 1308 500 1321 590 1335 480 1350 470 1365 520 1385 535 1395 470 1402 550 1415 450 1431 583 1440 480 1465 540 1480 450 1503 550 1515 540 1530 480 1559 500"],
 [1036, 238,
 "0 195 10 240 27 135 38 105 48 180 60 270 75 215 86 123 95 190 108 230 119 178 127 230 141 157 155 240 172 153 187 172 200 240 222 175 239 145 252 250 266 175 278 225 291 158 300 210 330 195 344 157 352 220 369 140 382 240 400 195 412 240 430 152 438 215 455 195 470 250 491 173 510 215 527 240 536 145 550 205 566 195 580 245 595 215 605 137 615 200 630 240 650 215 661 155 670 210 695 215 710 188 735 210 750 240 772 185 790 225 815 208 835 195 865 225 884 198 915 235 950 207 965 225 978 200 995 222 1010 200 1030 240 1057 202 1075 235 1079 210 1105 217 1120 235 1130 218 1150 235 1175 222 1200 228 1250 222 1260 235 1293 225 1310 235 1350 229 1375 238 1410 232 1440 236 1494 235",
 "0 340 15 328 25 240 40 210 50 290 62 368 70 280 82 215 95 240 108 335 118 250 130 280 140 240 153 325 165 250 180 290 190 270 207 313 220 230 240 215 254 335 265 260 275 300 290 230 310 285 327 320 340 260 355 315 370 230 385 312 395 260 405 300 420 270 430 220 450 280 473 312 482 240 500 265 527 310 535 220 555 235 577 298 592 285 605 210 625 305 640 285 660 230 685 265 700 290 710 225 730 250 748 298 757 235 775 225 795 270 820 260 840 225 860 265 875 270 890 230 915 272 945 240 980 268 1000 240 1020 255 1044 270 1057 220 1075 255 1093 268 1105 235 1125 250 1145 260 1165 245 1200 252 1250 245 1300 248 1380 242 1494 240"]
];
function knots(i){
  const out=[];
  for(const b of blocks){const n=b[i].split(' ').map(Number);
    for(let k=0;k<n.length;k+=2) out.push([b[0]+n[k]/3,(n[k+1]-b[1])/3]);}
  return out;
}
function sampler(list){
  let k=0;
  return x=>{while(k<list.length-2&&list[k+1][0]<x)k++;
    const [x0,y0]=list[k],[x1,y1]=list[k+1],t=x1>x0?Math.min(1,Math.max(0,(x-x0)/(x1-x0))):0;
    return y0+(y1-y0)*t;};
}
function draw(id,mid,seed){
  let r=seed,d='';
  const rnd=()=>(r=(r*1103515245+12345)%2147483648)/2147483648;
  const up=sampler(knots(2)),lo=sampler(knots(3));
  for(let x=0;x<1533;x++){
    let a=up(x),b=lo(x);
    if(x>45){
      const e=65*Math.pow(1-x/1533,1.5);
      if(rnd()<.35)a*=1-rnd()*.45; else a-=Math.pow(rnd(),4)*e;
      if(rnd()<.35)b*=1-rnd()*.45; else b+=Math.pow(rnd(),4)*e;
    }
    if(a>b)[a,b]=[b,a];
    a=Math.max(-140,Math.round(a)); b=Math.min(140,Math.max(a+2,Math.round(b)));
    d+='M'+(x+.5)+' '+(mid+a)+'V'+(mid+b);
  }
  document.getElementById(id).setAttribute('d',d);
}
draw('chL',141,7);
draw('chR',421,7);
</script>
<script src="https://cdn.jsdelivr.net/npm/bootstrap@5.3.0/dist/js/bootstrap.bundle.min.js"></script>
</body>
</html>
